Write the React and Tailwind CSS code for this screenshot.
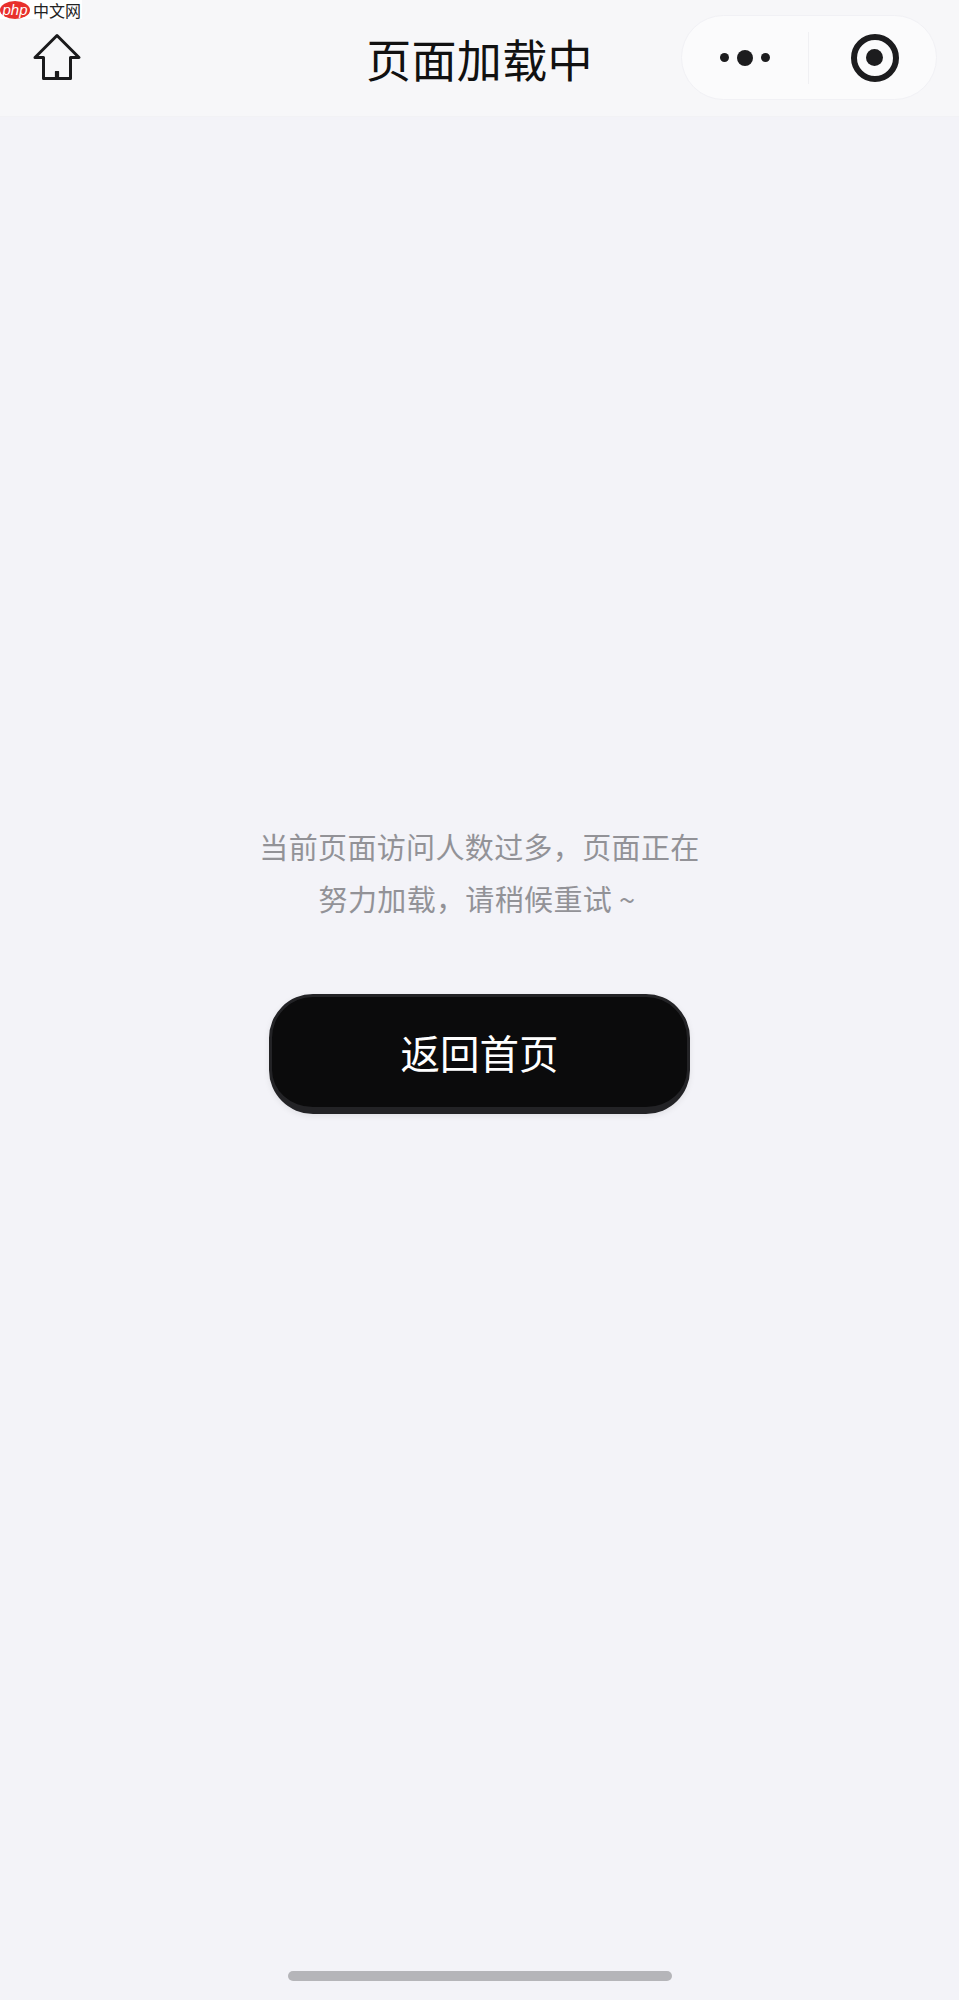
const cjk = { fontFamily: '"Noto Sans CJK SC", "Noto Sans", sans-serif' };

function HomeIcon() {
  return (
    <svg width="50" height="48" viewBox="0 0 50 48" fill="none" stroke="#1a1a1c" strokeWidth="3" strokeLinejoin="round" strokeLinecap="round">
      <path d="M3 24.5 25 2.5l22 22h-8.5V45.5h-27V24.5z" />
      <path d="M23.5 45V38.5h3V45z" fill="#1a1a1c" strokeWidth="1.2" />
    </svg>
  );
}

function Capsule() {
  return (
    <div className="flex h-[85px] w-[256px] items-center rounded-full border border-[#f1f1f5] bg-[#fbfbfc]">
      <div className="flex w-[126px] items-center justify-center gap-[8px]">
        <span className="h-[9px] w-[9px] rounded-full bg-[#1c1c1e]" />
        <span className="h-[16px] w-[16px] rounded-full bg-[#1c1c1e]" />
        <span className="h-[9px] w-[9px] rounded-full bg-[#1c1c1e]" />
      </div>
      <div className="h-[52px] w-px bg-[#f0f0f3]" />
      <div className="flex flex-1 items-center justify-center pl-[4px]">
        <div className="flex h-[48px] w-[48px] items-center justify-center rounded-full border-[6px] border-[#1c1c1e]">
          <span className="h-[17px] w-[17px] rounded-full bg-[#1c1c1e]" />
        </div>
      </div>
    </div>
  );
}

function Watermark() {
  return (
    <div className="absolute left-0 top-0 flex h-[19px] w-[82px] items-center bg-white">
      <span className="flex h-[18px] w-[30px] items-center justify-center rounded-[50%] bg-[#e8302c] text-[15px] italic leading-none text-white" style={{ fontFamily: '"Liberation Sans", sans-serif' }}>php</span>
      <span className="ml-[3px] text-[16px] leading-none text-[#222]" style={cjk}>中文网</span>
    </div>
  );
}

export default function App() {
  return (
    <div className="relative flex h-[2000px] w-[959px] flex-col bg-[#f3f3f8]" style={cjk}>
      <Watermark />
      <header className="grid h-[117px] shrink-0 grid-cols-[1fr_auto_1fr] items-center border-b border-[#f2f2f5] bg-[#f7f7f9]">
        <div className="pl-[32px] pb-[2px]">
          <HomeIcon />
        </div>
        <h1 className="text-[45px] font-normal leading-none tracking-[0.3px] text-[#111]">页面加载中</h1>
        <div className="flex justify-end pb-[1px] pr-[22px]">
          <Capsule />
        </div>
      </header>
      <main className="flex flex-1 flex-col items-center pt-[703px]">
        <p className="w-[460px] text-center text-[29px] leading-[52px] tracking-[0.35px] text-[#929297]">
          当前页面访问人数过多，页面正在<br />努力加载，请稍候重试 ~<span className="inline-block w-[5px]" />
        </p>
        <button className="mt-[70px] h-[120px] w-[421px] rounded-[44px] border-[3px] border-b-[7px] border-[#232326] bg-[#0b0b0c] text-[39.5px] text-white shadow-[0_2px_6px_rgba(0,0,0,0.08)]">
          返回首页
        </button>
        <div className="mt-auto mb-[19px] h-[10px] w-[384px] rounded-full bg-[#b5b5b9]" />
      </main>
    </div>
  );
}
